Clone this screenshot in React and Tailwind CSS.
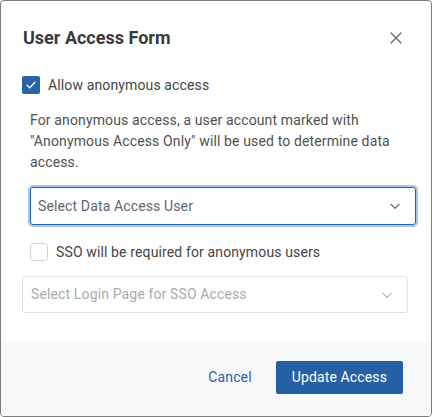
import React from 'react'

const Chevron = ({ className }) => (
  <svg className={className} width="14" height="14" viewBox="0 0 24 24" fill="none" stroke="currentColor" strokeWidth="2" strokeLinecap="round" strokeLinejoin="round">
    <path d="M5 9l7 7 7-7" />
  </svg>
)

export default function App() {
  return (
    <div
      className="w-[432px] h-[417px] bg-white border border-[#7d7d7d] rounded-[4px] overflow-hidden flex flex-col text-[#3f3f3f]"
      style={{ fontFamily: 'Roboto, "Liberation Sans", sans-serif' }}
    >
      {/* Header */}
      <div className="flex items-center justify-between pl-[22px] pr-[28px] pt-[25px] h-[48px]">
        <h2 className="text-[18px] font-bold text-[#3a3a3a] leading-none">User Access Form</h2>
        <svg width="14" height="14" viewBox="0 0 14 14" stroke="#6b6b6b" strokeWidth="1.4" strokeLinecap="round">
          <path d="M2 2l10 10M12 2L2 12" />
        </svg>
      </div>

      {/* Body */}
      <div className="flex-1 flex flex-col pl-[21px] pr-[15px] pt-[27px] tracking-[0.13px]">
        <label className="flex items-center gap-2 h-[18px]">
          <span className="w-[18px] h-[18px] rounded-[2px] bg-[#2a62a6] flex items-center justify-center">
            <svg width="12" height="12" viewBox="0 0 12 12" fill="none" stroke="white" strokeWidth="1.3" strokeLinecap="round" strokeLinejoin="round">
              <path d="M2 6.3l2.6 2.5L10 3.3" />
            </svg>
          </span>
          <span className="text-[14px] text-[#444]">Allow anonymous access</span>
        </label>

        <p className="ml-[8px] mt-[16px] text-[14px] leading-[21px] text-[#505050]">
          For anonymous access, a user account marked with "Anonymous Access Only" will be used to determine data access.
        </p>

        <div className="ml-[8px] mt-[14px] h-[38px] rounded-[3px] border border-[#2a62a6] ring-2 ring-[#a9c6ec] flex items-center justify-between pl-[7px] pr-[13px]">
          <span className="text-[14px] text-[#5f6670]">Select Data Access User</span>
          <Chevron className="text-[#666]" />
        </div>

        <label className="ml-[8px] mt-[18px] flex items-center gap-2 h-[18px]">
          <span className="w-[18px] h-[18px] rounded-[3px] border border-[#d4d4d4] bg-white" />
          <span className="text-[14px] text-[#444]">SSO will be required for anonymous users</span>
        </label>

        <div className="mt-[15px] mr-[8px] h-[37px] rounded-[3px] border border-[#e3e3e3] flex items-center justify-between pl-[8px] pr-[13px]">
          <span className="text-[14px] text-[#a8abaf]">Select Login Page for SSO Access</span>
          <Chevron className="text-[#b3b3b3]" />
        </div>
      </div>

      {/* Footer */}
      <div className="h-[74px] bg-[#f7f8fa] flex items-center justify-end gap-[24px] pr-[28px] pb-[3px] tracking-[0.13px]">
        <button className="text-[14px] text-[#2a62a6]">Cancel</button>
        <button className="h-[33px] px-[16px] rounded-[2px] bg-[#2660a4] text-white text-[14px]">Update Access</button>
      </div>
    </div>
  )
}
